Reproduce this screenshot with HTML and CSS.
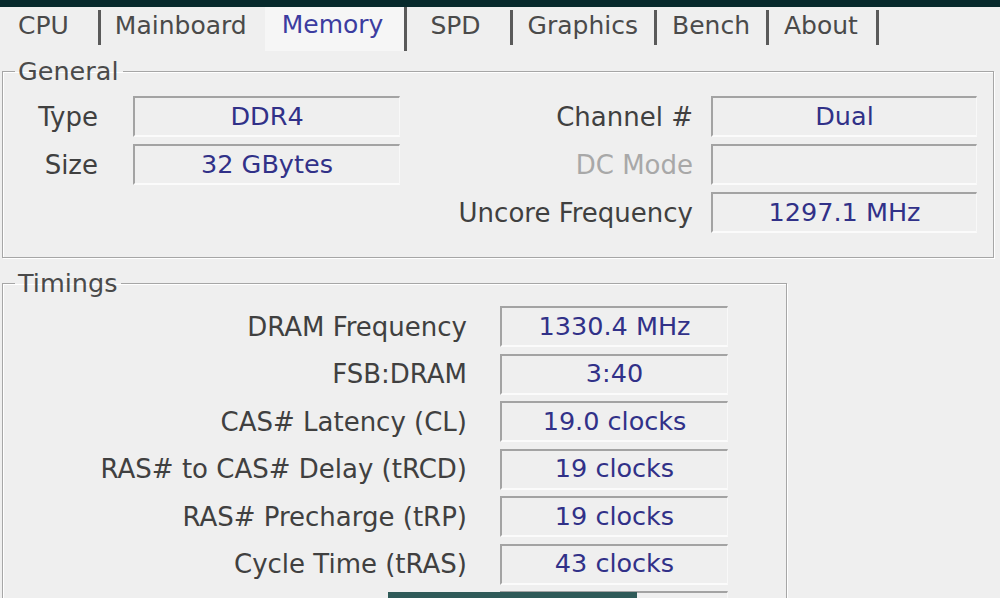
FILE: index.html
```html
<!DOCTYPE html>
<html>
<head>
<meta charset="utf-8">
<title>CPU-Z Memory</title>
<link rel="stylesheet" href="styles.css">
</head>
<body>
<div class="topbar"></div>
<nav class="tabs">
  <span class="tab first">CPU</span>
  <span class="tab pre-active">Mainboard</span>
  <span class="tab active">Memory</span>
  <span class="tab spd">SPD</span>
  <span class="tab">Graphics</span>
  <span class="tab">Bench</span>
  <span class="tab last">About</span>
</nav>
<fieldset class="group general">
  <legend>General</legend>
  <div class="gen-grid">
    <span class="lbl l1">Type</span><span class="val">DDR4</span>
    <span class="lbl l2">Channel #</span><span class="val">Dual</span>
    <span class="lbl l1">Size</span><span class="val">32 GBytes</span>
    <span class="lbl l2 dim">DC Mode</span><span class="val"></span>
    <span class="lbl l1"></span><span class="blank"></span>
    <span class="lbl l2">Uncore Frequency</span><span class="val">1297.1 MHz</span>
  </div>
</fieldset>
<fieldset class="group timings">
  <legend>Timings</legend>
  <div class="tim-grid">
    <span class="lbl">DRAM Frequency</span><span class="val">1330.4 MHz</span>
    <span class="lbl">FSB:DRAM</span><span class="val">3:40</span>
    <span class="lbl">CAS# Latency (CL)</span><span class="val">19.0 clocks</span>
    <span class="lbl">RAS# to CAS# Delay (tRCD)</span><span class="val">19 clocks</span>
    <span class="lbl">RAS# Precharge (tRP)</span><span class="val">19 clocks</span>
    <span class="lbl">Cycle Time (tRAS)</span><span class="val">43 clocks</span>
    <span class="lbl"></span><span class="val"></span>
  </div>
</fieldset>
<div class="taskstrip"></div>
</body>
</html>
```
FILE: styles.css
```css
html, body {
  margin: 0;
  padding: 0;
  height: 598px;
  overflow: hidden;
}
body {
  background: #efefef;
  font-family: "DejaVu Sans", Verdana, sans-serif;
  font-size: 26px;
  color: #3e3e3e;
  position: relative;
}
.topbar {
  height: 7px;
  background: #072a2c;
}
.tabs {
  display: flex;
  height: 41px;
  align-items: stretch;
  font-size: 25px;
}
.tab {
  display: flex;
  align-items: center;
  padding: 0 16px 4px 15px;
  color: #4a4a4a;
  border-right: 3px solid #5a5a5a;
  margin: 3px 0;
  line-height: 1;
}
.tab.first {
  padding-left: 18px;
  padding-right: 29px;
}
.tab.pre-active {
  border-right: 0;
  padding-left: 14px;
  padding-right: 18px;
}
.tab.spd {
  padding-left: 23px;
  padding-right: 29px;
}
.tab.last {
  padding-right: 18px;
}
.tab.active {
  color: #3c3ca0;
  background: #f6f6f6;
  margin-top: 0;
  margin-bottom: -3px;
  padding: 0 21px 10px 17px;
}
.group {
  margin: 11px 6px 0 2px;
  border: 1px solid #a6a6a6;
  box-shadow: inset 1px 1px 0 #ffffff, 1px 1px 0 #ffffff;
  padding: 0;
  min-width: 0;
}
.group legend {
  margin-left: 12px;
  padding: 0 4px 0 3px;
  line-height: 26px;
  font-size: 25.5px;
  color: #4a4a4a;
}
.general {
  margin-top: 10px;
  padding: 12px 16px 24px 0;
}
.gen-grid {
  display: grid;
  grid-template-columns: 130px 267px 1fr 266px;
  grid-auto-rows: 41px;
  row-gap: 7px;
}
.lbl {
  display: flex;
  align-items: center;
  justify-content: flex-end;
  white-space: nowrap;
  color: #404040;
}
.l1 { padding-right: 35px; }
.l2 { padding-right: 18px; }
.dim { color: #a8a8a8; }
.val {
  display: flex;
  align-items: center;
  justify-content: center;
  color: #313188;
  font-size: 25.5px;
  border-top: 2px solid #a3a3a3;
  border-left: 2px solid #a3a3a3;
  border-bottom: 2px solid #fbfbfb;
  border-right: 1px solid #f8f8f8;
  background: #efefef;
  white-space: nowrap;
  padding-bottom: 2px;
}
.timings {
  margin: 12px 213px 0 2px;
  padding: 10px 58px 0 0;
}
.tim-grid {
  display: grid;
  grid-template-columns: 1fr 228px;
  grid-auto-rows: 41px;
  row-gap: 6.5px;
}
.tim-grid .lbl {
  padding-right: 33px;
}
.taskstrip {
  position: absolute;
  left: 388px;
  top: 592px;
  width: 249px;
  height: 6px;
  background: #2f5a58;
}
```
